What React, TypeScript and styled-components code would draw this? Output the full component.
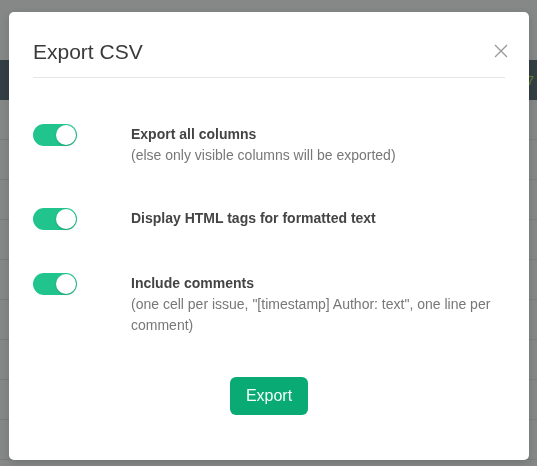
import React from "react";
import styled, { createGlobalStyle } from "styled-components";

/* Base da página */
const GlobalStyle = createGlobalStyle`
  html, body {
    margin: 0;
    padding: 0;
    background: #868787;
    font-family: "Liberation Sans", Arial, sans-serif;
  }
  * { box-sizing: border-box; }
`;

/* ================================
   FUNDO (aplicação atrás do modal)
================================ */

const Page = styled.div`
  width: 100%;
  height: 466px;
  padding-top: 60px;
  overflow: hidden;
`;

const TopBar = styled.div`
  height: 40px;
  background: #343f45;
  display: flex;
  align-items: center;
  justify-content: flex-end;
  padding-right: 3px;
  color: #5f8a2c;
  font-size: 13px;
`;

const BackRow = styled.div`
  height: 40px;
  border-bottom: 1px solid #7b7c7c;
`;

/* ================================
   OVERLAY + MODAL
================================ */

const Overlay = styled.div`
  position: fixed;
  inset: 0;
  display: flex;
  align-items: flex-start;
  padding: 12px 0 0 9px;
`;

const Modal = styled.div`
  position: relative;
  width: 520px;
  background: #ffffff;
  border-radius: 5px;
  box-shadow: 0 3px 8px rgba(0, 0, 0, 0.15);
  padding: 28px 24px 45px;
`;

const Title = styled.h2`
  margin: 0;
  font-size: 21px;
  font-weight: 400;
  line-height: 24px;
  color: #3a3a3a;
  padding-bottom: 13px;
  border-bottom: 1px solid #e5e5e5;
`;

const CloseButton = styled.button`
  position: absolute;
  top: 32px;
  right: 21px;
  width: 14px;
  height: 14px;
  padding: 0;
  border: 0;
  background: none;
  cursor: pointer;
  display: flex;
  align-items: center;
  justify-content: center;
`;

const Options = styled.div`
  display: flex;
  flex-direction: column;
  gap: 42px;
  padding-top: 45px;
`;

const OptionRow = styled.label`
  display: grid;
  grid-template-columns: 98px 1fr;
  align-items: start;
`;

/* Desloca o texto 1px sem alterar a altura da linha */
const OptionText = styled.div`
  position: relative;
  top: 1px;
  font-size: 14px;
  line-height: 21px;
`;

const OptionLabel = styled.div`
  font-weight: 700;
  color: #444;
`;

const OptionHint = styled.div`
  color: #777;
`;

/* Switch estilo iOS */
const Switch = styled.span<{ $on: boolean }>`
  position: relative;
  display: block;
  width: 44px;
  height: 22px;
  margin-top: 1px;
  border-radius: 11px;
  background: ${(p) => (p.$on ? "#22c48e" : "#d5d5d5")};

  &::after {
    content: "";
    position: absolute;
    top: 1px;
    left: ${(p) => (p.$on ? "23px" : "1px")};
    width: 20px;
    height: 20px;
    border-radius: 50%;
    background: #fff;
    box-shadow: 0 1px 2px rgba(0, 0, 0, 0.2);
  }
`;

const Footer = styled.div`
  display: flex;
  justify-content: center;
  margin-top: 42px;
`;

const ExportButton = styled.button`
  height: 38px;
  padding: 0 16px;
  border: 0;
  border-radius: 6px;
  background: #0aaa75;
  color: #f4fffa;
  font-family: "Liberation Sans", Arial, sans-serif;
  font-size: 16px;
  cursor: pointer;
`;

const options = [
  { label: "Export all columns", hint: "(else only visible columns will be exported)" },
  { label: "Display HTML tags for formatted text" },
  {
    label: "Include comments",
    hint: '(one cell per issue, "[timestamp] Author: text", one line per comment)',
  },
];

export default function App() {
  return (
    <>
      <GlobalStyle />
      <Page>
        <TopBar>7</TopBar>
        {Array.from({ length: 9 }).map((_, i) => (
          <BackRow key={i} />
        ))}
      </Page>
      <Overlay>
        <Modal>
          <Title>Export CSV</Title>
          <CloseButton aria-label="Close">
            <svg width="14" height="14" viewBox="0 0 14 14">
              <path d="M1 1L13 13M13 1L1 13" stroke="#999" strokeWidth="1.3" fill="none" />
            </svg>
          </CloseButton>
          <Options>
            {options.map((o) => (
              <OptionRow key={o.label}>
                <Switch $on />
                <OptionText>
                  <OptionLabel>{o.label}</OptionLabel>
                  {o.hint && <OptionHint>{o.hint}</OptionHint>}
                </OptionText>
              </OptionRow>
            ))}
          </Options>
          <Footer>
            <ExportButton>Export</ExportButton>
          </Footer>
        </Modal>
      </Overlay>
    </>
  );
}
